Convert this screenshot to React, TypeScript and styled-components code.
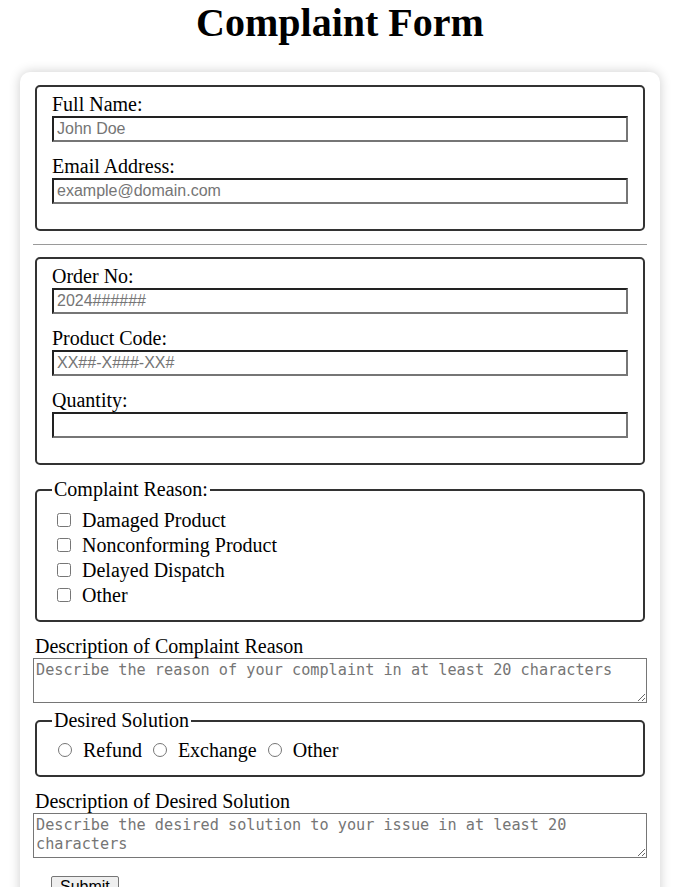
import React from "react";
import styled, { createGlobalStyle } from "styled-components";

const GlobalStyle = createGlobalStyle`
  body {
    margin: 0;
    background: #ffffff;
    font-family: "Liberation Serif", "Times New Roman", serif;
    font-size: 20px;
    color: #000;
  }
`;

const Page = styled.div`
  padding: 0 20px;
`;

const Wrapper = styled.div`
  max-width: 640px;
`;

const Title = styled.h1`
  margin: 0 0 26px;
  font-size: 40px;
  line-height: 46px;
  font-weight: bold;
  text-align: center;
`;

const Card = styled.form`
  background: #ffffff;
  border-radius: 10px;
  box-shadow: 0 0 12px rgba(0, 0, 0, 0.2);
  padding: 13px;
`;

const Group = styled.fieldset<{ $padTop?: number }>`
  margin: 0 2px 13px;
  border: 2px solid #333333;
  border-radius: 5px;
  padding: ${(p) => p.$padTop ?? 6}px 15px 12px;
  min-width: 0;
`;

const Legend = styled.legend`
  padding: 0 2px;
  font-size: 20px;
  line-height: 23px;
`;

const Field = styled.div`
  margin-bottom: 13px;
`;

const Label = styled.label`
  display: block;
  line-height: 23px;
`;

const TextInput = styled.input`
  display: block;
  width: 100%;
  box-sizing: border-box;
  height: 26px;
  margin: 0;
  border: 2px solid;
  border-color: #222222 #767676 #767676 #222222;
  padding: 2px 3px;
  font-family: "Liberation Sans", Arial, sans-serif;
  font-size: 16px;
  background: #fff;
  &::placeholder {
    color: #757575;
  }
`;

const Divider = styled.hr`
  margin: 0 0 12px;
  border: 0;
  border-top: 1px solid #9a9a9a;
  height: 0;
`;

const CheckRow = styled.label`
  display: flex;
  align-items: center;
  height: 25px;
  line-height: 23px;
`;

const Box = styled.input`
  width: 14px;
  height: 14px;
  margin: 0 11px 2px 5px;
`;

const RadioRow = styled.div`
  display: flex;
  align-items: center;
  height: 25px;
  line-height: 23px;
`;

const RadioOption = styled.label`
  display: flex;
  align-items: center;
  margin-right: 5px;
`;

const Radio = styled.input`
  width: 14px;
  height: 14px;
  margin: 0 11px 2px 6px;
`;

const AreaLabel = styled.label`
  display: block;
  padding-left: 2px;
  line-height: 23px;
`;

const TextArea = styled.textarea`
  display: block;
  width: 100%;
  box-sizing: border-box;
  height: 45px;
  margin: 0 0 6px;
  border: 1px solid #767676;
  padding: 2px;
  font-family: "DejaVu Sans Mono", "Liberation Mono", monospace;
  font-size: 15.2px;
  line-height: 19px;
  &::placeholder {
    color: #757575;
  }
`;

const SubmitButton = styled.button`
  margin: 12px 0 0 18px;
  font-family: "Liberation Sans", Arial, sans-serif;
  font-size: 16px;
  padding: 1px 8px;
  border: 1px solid #767676;
  border-radius: 2px;
  background: #efefef;
  color: #000;
`;

const reasons = [
  "Damaged Product",
  "Nonconforming Product",
  "Delayed Dispatch",
  "Other",
];

const solutions = ["Refund", "Exchange", "Other"];

export default function App() {
  return (
    <>
      <GlobalStyle />
      <Page>
        <Wrapper>
          <Title>Complaint Form</Title>
          <Card onSubmit={(e) => e.preventDefault()}>
            <Group>
              <Field>
                <Label htmlFor="name">Full Name:</Label>
                <TextInput id="name" type="text" placeholder="John Doe" />
              </Field>
              <Field>
                <Label htmlFor="email">Email Address:</Label>
                <TextInput id="email" type="email" placeholder="example@domain.com" />
              </Field>
            </Group>
            <Divider />
            <Group>
              <Field>
                <Label htmlFor="order">Order No:</Label>
                <TextInput id="order" type="text" placeholder="2024######" />
              </Field>
              <Field>
                <Label htmlFor="code">Product Code:</Label>
                <TextInput id="code" type="text" placeholder="XX##-X###-XX#" />
              </Field>
              <Field>
                <Label htmlFor="qty">Quantity:</Label>
                <TextInput id="qty" type="number" />
              </Field>
            </Group>
            <Group $padTop={7}>
              <Legend>Complaint Reason:</Legend>
              {reasons.map((r) => (
                <CheckRow key={r}>
                  <Box type="checkbox" name="reason" value={r} />
                  {r}
                </CheckRow>
              ))}
            </Group>
            <AreaLabel htmlFor="reasonDesc">Description of Complaint Reason</AreaLabel>
            <TextArea
              id="reasonDesc"
              placeholder="Describe the reason of your complaint in at least 20 characters"
            />
            <Group>
              <Legend>Desired Solution</Legend>
              <RadioRow>
                {solutions.map((s) => (
                  <RadioOption key={s}>
                    <Radio type="radio" name="solution" value={s} />
                    {s}
                  </RadioOption>
                ))}
              </RadioRow>
            </Group>
            <AreaLabel htmlFor="solutionDesc">Description of Desired Solution</AreaLabel>
            <TextArea
              id="solutionDesc"
              placeholder="Describe the desired solution to your issue in at least 20 characters"
            />
            <SubmitButton type="submit">Submit</SubmitButton>
          </Card>
        </Wrapper>
      </Page>
    </>
  );
}
